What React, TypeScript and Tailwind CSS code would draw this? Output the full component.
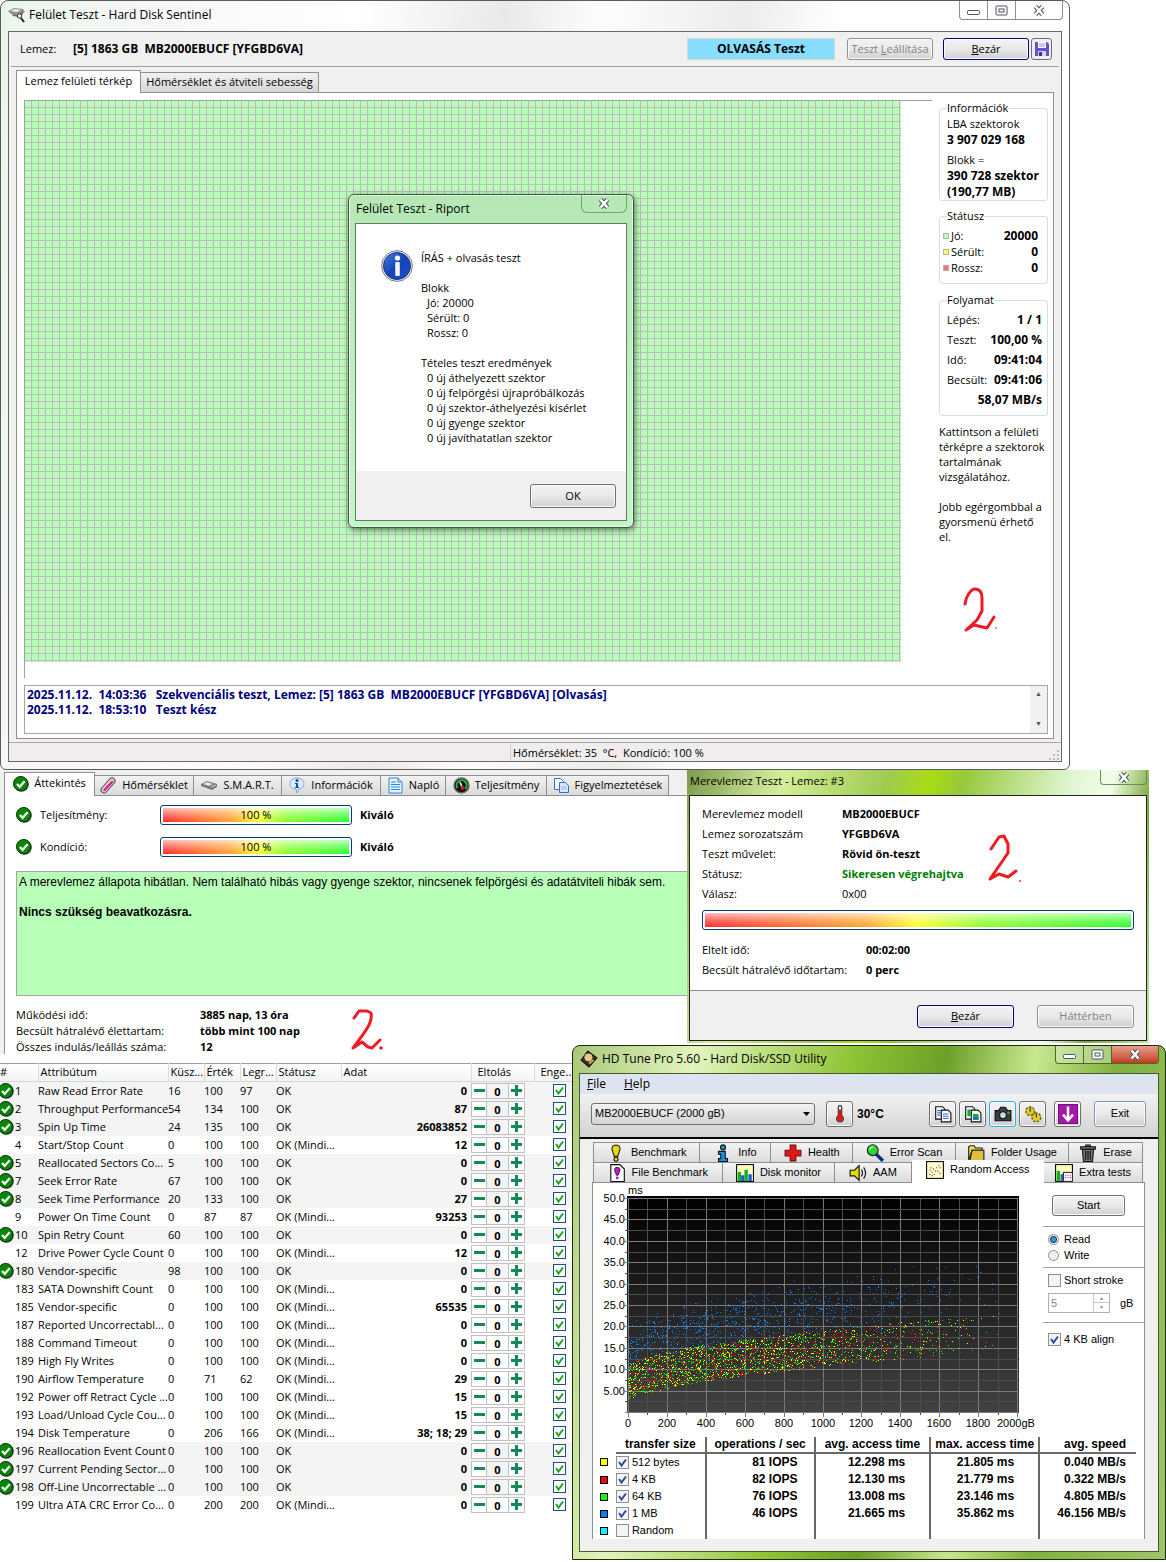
import React, { useState } from "react";
import clsx from "clsx";

/* ---------- data ---------- */

type Attr = [number, string, number, number, number, boolean, string];

// id, name, threshold, value, worst, critical, raw data
const attributes: Attr[] = [
  [1, "Raw Read Error Rate", 16, 100, 97, true, "0"],
  [2, "Throughput Performance", 54, 134, 100, true, "87"],
  [3, "Spin Up Time", 24, 135, 100, true, "26083852"],
  [4, "Start/Stop Count", 0, 100, 100, false, "12"],
  [5, "Reallocated Sectors Co...", 5, 100, 100, true, "0"],
  [7, "Seek Error Rate", 67, 100, 100, true, "0"],
  [8, "Seek Time Performance", 20, 133, 100, true, "27"],
  [9, "Power On Time Count", 0, 87, 87, false, "93253"],
  [10, "Spin Retry Count", 60, 100, 100, true, "0"],
  [12, "Drive Power Cycle Count", 0, 100, 100, false, "12"],
  [180, "Vendor-specific", 98, 100, 100, true, "0"],
  [183, "SATA Downshift Count", 0, 100, 100, false, "0"],
  [185, "Vendor-specific", 0, 100, 100, false, "65535"],
  [187, "Reported Uncorrectabl...", 0, 100, 100, false, "0"],
  [188, "Command Timeout", 0, 100, 100, false, "0"],
  [189, "High Fly Writes", 0, 100, 100, false, "0"],
  [190, "Airflow Temperature", 0, 71, 62, false, "29"],
  [192, "Power off Retract Cycle ...", 0, 100, 100, false, "15"],
  [193, "Load/Unload Cycle Cou...", 0, 100, 100, false, "15"],
  [194, "Disk Temperature", 0, 206, 166, false, "38; 18; 29"],
  [196, "Reallocation Event Count", 0, 100, 100, true, "0"],
  [197, "Current Pending Sector...", 0, 100, 100, true, "0"],
  [198, "Off-Line Uncorrectable ...", 0, 100, 100, true, "0"],
  [199, "Ultra ATA CRC Error Co...", 0, 200, 200, false, "0"],
];

const transfers = [
  { size: "512 bytes", color: "bg-[#ffff00]", on: true, iops: "81 IOPS", avg: "12.298 ms", max: "21.805 ms", speed: "0.040 MB/s" },
  { size: "4 KB", color: "bg-[#ff0000]", on: true, iops: "82 IOPS", avg: "12.130 ms", max: "21.779 ms", speed: "0.322 MB/s" },
  { size: "64 KB", color: "bg-[#00ff00]", on: true, iops: "76 IOPS", avg: "13.008 ms", max: "23.146 ms", speed: "4.805 MB/s" },
  { size: "1 MB", color: "bg-[#0080ff]", on: true, iops: "46 IOPS", avg: "21.665 ms", max: "35.862 ms", speed: "46.156 MB/s" },
  { size: "Random", color: "bg-[#00ffff]", on: false, iops: "", avg: "", max: "", speed: "" },
];

/* ---------- icons ---------- */

function CheckBadge() {
  return (
    <svg width="16" height="16" viewBox="0 0 16 16" className="block shrink-0">
      <circle cx="8.6" cy="8.6" r="7.2" fill="#555" />
      <circle cx="7.7" cy="7.7" r="7.2" fill="#0a860a" stroke="#032d03" strokeWidth="1" />
      <path d="M4 8l2.7 2.8 5-5.6" fill="none" stroke="#fff" strokeWidth="2.2" />
    </svg>
  );
}

function Scribble({ d, dot, className }: { d: string; dot: [number, number, number]; className: string }) {
  return (
    <svg viewBox="0 0 36 50" width="36" height="50" className={clsx("pointer-events-none absolute", className)}>
      <path d={d} fill="none" stroke="#ed1c24" strokeWidth="3" strokeLinecap="round" strokeLinejoin="round" />
      <circle cx={dot[0]} cy={dot[1]} r={dot[2]} fill="#ed1c24" />
    </svg>
  );
}

function CloseGlyph() {
  return (
    <svg width="14" height="11" viewBox="0 0 14 11" className="shrink-0">
      <path d="M3.500 1.500l7 8M10.500 1.500l-7 8" stroke="#4d5560" strokeWidth="4.600" />
      <path d="M3.500 1.500l7 8M10.500 1.500l-7 8" stroke="#fff" strokeWidth="2.600" />
    </svg>
  );
}

function MinGlyph() {
  return (
    <svg width="13" height="11" viewBox="0 0 13 11">
      <rect x=".5" y="5.500" width="12" height="4" rx="1" fill="#fff" stroke="#4d5560" />
    </svg>
  );
}

function MaxGlyph() {
  return (
    <svg width="13" height="11" viewBox="0 0 13 11">
      <rect x="1" y="1" width="11" height="9" rx="1" fill="#fff" stroke="#4d5560" />
      <rect x="4" y="4" width="5" height="3" fill="#fff" stroke="#4d5560" />
    </svg>
  );
}

function DiskIcon() {
  return (
    <svg width="17" height="16" viewBox="0 0 17 16" className="shrink-0">
      <path d="M0 4l6-3 9 1 2 3-5 3-9-1z" fill="#8e8e8e" />
      <path d="M2 4l5-2 6 1-4 2z" fill="#ededed" />
      <path d="M4 7l6 1 5-3v2l-4 3-6-1z" fill="#666" />
      <circle cx="11.500" cy="9" r="2.200" fill="#eee" stroke="#333" />
      <path d="M13 11l3 4" stroke="#222" strokeWidth="2" />
    </svg>
  );
}

function FloppyIcon() {
  return (
    <svg width="16" height="16" viewBox="0 0 16 16">
      <path d="M1 1h12l2 2v12H1z" fill="#6a50c8" />
      <rect x="4" y="1" width="8" height="6" fill="#fff" />
      <path d="M5 3h6M5 5h6" stroke="#9a8be0" />
      <rect x="4" y="10" width="8" height="5" fill="#d6d0f4" />
      <rect x="5" y="11" width="3" height="4" fill="#3c2a96" />
    </svg>
  );
}

function InfoBall() {
  return (
    <svg width="32" height="32" viewBox="0 0 32 32" className="shrink-0">
      <defs>
        <linearGradient id="ball" x1="0" y1="0" x2="1" y2="1">
          <stop offset="0" stopColor="#4a7fe0" />
          <stop offset=".5" stopColor="#1443b8" />
          <stop offset="1" stopColor="#1c4fd2" />
        </linearGradient>
      </defs>
      <circle cx="16" cy="16" r="15.4" fill="#e6e6e6" stroke="#808080" />
      <circle cx="16" cy="16" r="13.5" fill="url(#ball)" stroke="#16338a" />
      <circle cx="16.5" cy="8" r="2.6" fill="#fff" />
      <rect x="14.2" y="12" width="4.6" height="14" rx="1" fill="#f4f4f4" />
    </svg>
  );
}

function ThermoTabIcon() {
  return (
    <svg width="17" height="17" viewBox="0 0 17 17">
      <path d="M4 13L12 4" stroke="#4b4b4b" strokeWidth="7" strokeLinecap="round" />
      <path d="M4 13L12 4" stroke="#d9d9d9" strokeWidth="5" strokeLinecap="round" />
      <path d="M4.500 13L12 5" stroke="#e0218a" strokeWidth="2.500" strokeLinecap="round" />
    </svg>
  );
}

function DriveTabIcon() {
  return (
    <svg width="17" height="17" viewBox="0 0 17 17">
      <path d="M0 7l6-3 10 3v3l-5 3L0 9z" fill="#777" />
      <path d="M2 7l4-2 6 2-4 2z" fill="#e2e2e2" />
      <path d="M10 10l5-2" stroke="#ddd" />
    </svg>
  );
}

function BalloonTabIcon() {
  return (
    <svg width="17" height="17" viewBox="0 0 17 17">
      <path d="M8 1c4 0 7 2 7 5.500s-2 5-5 5.500l-2 4-1-4C3 12 1 10 1 6.500S4 1 8 1z" fill="#dcecfb" stroke="#7fa9d3" />
      <circle cx="8" cy="3.500" r="1.500" fill="#0b4db8" />
      <path d="M6 6h3v4h1v1H6v-1h1V7H6z" fill="#0b4db8" />
    </svg>
  );
}

function PageTabIcon() {
  return (
    <svg width="17" height="17" viewBox="0 0 17 17">
      <path d="M2 1h9l4 4v11H2z" fill="#e7f3ff" stroke="#2a86d8" />
      <path d="M11 1v4h4" fill="#bfe0ff" stroke="#2a86d8" />
      <path d="M4 5h5M4 7.500h9M4 10h9M4 12.500h9" stroke="#2a86d8" />
    </svg>
  );
}

function GaugeTabIcon() {
  return (
    <svg width="17" height="17" viewBox="0 0 17 17">
      <circle cx="8.500" cy="8.500" r="7.500" fill="#111" stroke="#6b6b6b" strokeWidth="1.500" />
      <path d="M4.500 11A5 5 0 1 1 12 12" fill="none" stroke="#1bbf3a" strokeWidth="2" />
      <path d="M7 5l2 5" stroke="#fff" strokeWidth="1.500" />
      <circle cx="9.500" cy="11" r="2" fill="#c42020" />
    </svg>
  );
}

function CopyTabIcon() {
  return (
    <svg width="17" height="17" viewBox="0 0 17 17">
      <path d="M1.500 1.500h6l3 3v8h-9z" fill="#fff" stroke="#3a6cc4" />
      <path d="M6.500 5.500h6l3 3v7h-9z" fill="#d7e6fb" stroke="#3a6cc4" />
      <path d="M8 10h6M8 12h6" stroke="#9cbcec" />
    </svg>
  );
}

function TuneIcon({ name }: { name: string }) {
  const shapes: Record<string, React.ReactNode> = {
    bang: (
      <>
        <path d="M8 1c3 0 4 2 3.500 4L9.500 11h-3L4.500 5C4 3 5 1 8 1z" fill="#e6dc00" stroke="#222" />
        <circle cx="8" cy="13.500" r="1.800" fill="#e6dc00" stroke="#222" />
      </>
    ),
    info: (
      <>
        <circle cx="8" cy="3" r="2.200" fill="#1496e6" stroke="#111" />
        <path d="M4 6.500h6V13h2v2.500H4V13h2V9H4z" fill="#1496e6" stroke="#111" />
      </>
    ),
    cross: <path d="M5.500 1h5v4.500H15v5h-4.500V15h-5v-4.500H1v-5h4.500z" fill="#e01818" stroke="#7c0b0b" />,
    lens: (
      <>
        <path d="M9 9l6 6" stroke="#0a2a8a" strokeWidth="3" />
        <circle cx="6" cy="5.500" r="4.800" fill="#2fd62f" stroke="#222" />
        <path d="M3.500 5a3 3 0 0 1 3-2.500" stroke="#d8ffd8" fill="none" />
      </>
    ),
    folder: (
      <>
        <path d="M1.500 14.500v-12l1-1h4l1 2h6v2h-9z" fill="#f0d860" stroke="#222" />
        <path d="M4.500 5.500h10.500v10H2.500z" fill="#e0bf3c" stroke="#222" />
      </>
    ),
    bin: (
      <>
        <path d="M3 4.500h10l-1 11H4z" fill="#777" stroke="#111" />
        <path d="M1.500 2.500h13v2h-13zM6 1h4v1.500H6zM6 6v8M8 6v8M10 6v8" fill="#999" stroke="#111" />
      </>
    ),
    pageBang: (
      <>
        <path d="M2.500.500h8l4 4v11h-12z" fill="#fff" stroke="#111" />
        <path d="M8 3c2.500 0 3 1.500 2.500 3L9 10H7.500L6 6C5.500 4.500 6 3 8 3z" fill="#c318c3" stroke="#111" strokeWidth=".7" />
        <circle cx="8.200" cy="12.500" r="1.300" fill="#c318c3" />
      </>
    ),
    bars: (
      <>
        <rect x=".5" y=".5" width="15" height="15" fill="#ffffc0" stroke="#111" />
        <path d="M3 15V7M9 15V5" stroke="#12b312" strokeWidth="3" />
        <path d="M6 15v-5M12.500 15V9" stroke="#1a5ae0" strokeWidth="3" />
      </>
    ),
    speaker: (
      <>
        <path d="M1 5.500h4l4-4v13l-4-4H1z" fill="#e6dc00" stroke="#111" />
        <path d="M11 5q2 3 0 6M13 3q3.500 5 0 10" fill="none" stroke="#111" />
      </>
    ),
    dots: (
      <>
        <rect x=".5" y=".5" width="15" height="15" fill="#ffffc8" stroke="#111" />
        <path d="M3 12h1M5 10h1M7 12h1M6 7h1M10 9h1M12 6h1M9 6h1M12 11h1M3 8h1" stroke="#e01818" />
        <path d="M4 6h1M8 9h1M11 4h1M5 13h1" stroke="#1a5ae0" />
      </>
    ),
    extra: (
      <>
        <rect x=".5" y=".5" width="15" height="15" fill="#ffffc0" stroke="#111" />
        <path d="M3 15V6" stroke="#12b312" strokeWidth="3" />
        <path d="M6 15V9" stroke="#1a5ae0" strokeWidth="2" />
        <rect x="7.500" y="7.500" width="8" height="8" fill="#fff" stroke="#333" />
        <path d="M9 10h1M11 10h1M13 10h1M9 12h1M11 12h1M13 12h1" stroke="#d01ad0" />
      </>
    ),
    thermo: (
      <>
        <path d="M6.500 2a1.500 1.500 0 0 1 3 0v7.500a3 3 0 1 1-3 0z" fill="#fff" stroke="#222" />
        <path d="M8 4v8" stroke="#e01818" strokeWidth="2.500" />
        <circle cx="8" cy="12" r="2.600" fill="#e01818" />
      </>
    ),
    copy: (
      <>
        <path d="M1.500 1.500h6l2 2v9h-8z" fill="#fff" stroke="#111" />
        <path d="M6.500 4.500h6l2.500 2.500v8H6.500z" fill="#fff" stroke="#111" />
        <path d="M3 5h3M3 7h3M3 9h3M8 8h5M8 10h5M8 12h5" stroke="#2a6ad0" />
      </>
    ),
    copyImg: (
      <>
        <path d="M1.500 1.500h6l2 2v9h-8z" fill="#fff" stroke="#111" />
        <path d="M6.500 4.500h6l2.500 2.500v8H6.500z" fill="#fff" stroke="#111" />
        <path d="M3 4h3v6H3zM8 8h5v5H8z" fill="#18a838" />
        <path d="M8 11h5v2H8z" fill="#1a5ae0" />
      </>
    ),
    camera: (
      <>
        <path d="M1 5h3l2-3h4l2 3h3v9H1z" fill="#3a3f44" stroke="#111" />
        <circle cx="8" cy="9" r="3" fill="#cdd" stroke="#111" />
        <rect x="12" y="6" width="2" height="1.500" fill="#2fd62f" />
      </>
    ),
    gears: (
      <>
        <circle cx="5.500" cy="5.500" r="3.500" fill="#d9c21c" stroke="#6d6100" strokeWidth="2" strokeDasharray="2 1" />
        <circle cx="5.500" cy="5.500" r="3.200" fill="#e0cc30" />
        <circle cx="11" cy="11" r="3.500" fill="#d9c21c" stroke="#6d6100" strokeWidth="2" strokeDasharray="2 1" />
        <circle cx="11" cy="11" r="3.200" fill="#e0cc30" />
        <path d="M5.500 2v4M11 8v3" stroke="#333" />
      </>
    ),
    down: (
      <>
        <rect x="0" y="0" width="16" height="16" fill="#a31aa8" stroke="#5d0a66" />
        <path d="M8 2v10M4 8.500L8 13l4-4.500" fill="none" stroke="#fff" strokeWidth="2" />
      </>
    ),
    app: (
      <>
        <path d="M7 1l8 6-7 8-7-6z" fill="#3a2f28" stroke="#111" />
        <circle cx="7.500" cy="6.500" r="3.500" fill="#e8c890" />
        <path d="M8 12l4-3" stroke="#e09a30" strokeWidth="2" />
      </>
    ),
  };
  const size = name === "down" ? 20 : 18;
  return (
    <svg width={size} height={size} viewBox="0 0 16 16" className="shrink-0">
      {shapes[name]}
    </svg>
  );
}

/* ---------- small controls ---------- */

function Button({ children, className, disabled, label }: { children: React.ReactNode; className?: string; disabled?: boolean; label?: string }) {
  return (
    <button
      type="button"
      disabled={disabled}
      aria-label={label}
      className={clsx(
        "flex items-center justify-center rounded-[3px] border bg-linear-to-b from-[#f3f3f3] via-[#e9e9e9] to-[#d0d0d0] whitespace-nowrap shadow-[inset_0_0_0_1px_#fbfbfb]",
        disabled ? "border-[#909090] text-[#838383]" : "text-black",
        className
      )}
    >
      {children}
    </button>
  );
}

function Meter({ label, children }: { label: string; children?: React.ReactNode }) {
  return (
    <div
      role="progressbar"
      aria-label={label}
      aria-valuenow={100}
      className="h-5 rounded-[3px] border border-[#003c74] bg-white p-[2px]"
    >
      <div className="h-full bg-[linear-gradient(90deg,#ff2a2a,#ffa62a_38%,#ffff2a_50%,#8cff2a_65%,#2aff2a)]">
        <div className="flex h-full items-center justify-center bg-linear-to-b from-white/70 via-white/30 to-transparent leading-4">
          {children}
        </div>
      </div>
    </div>
  );
}

function Tick({ id, on, className, color, label }: { id?: string; on: boolean; className: string; color: string; label?: string }) {
  const [checked, setChecked] = useState(on);
  return (
    <span className="inline-grid">
      <input
        type="checkbox"
        id={id}
        aria-label={label}
        checked={checked}
        onChange={() => setChecked(!checked)}
        className={clsx("size-[13px] appearance-none border [grid-area:1/1]", className)}
      />
      {checked && (
        <svg viewBox="0 0 13 13" className="pointer-events-none size-[13px] [grid-area:1/1]">
          <path d="M3 6l2.500 3.500L10 3.500" fill="none" stroke={color} strokeWidth="2" />
        </svg>
      )}
    </span>
  );
}

function Pair({ label, value, className }: { label: string; value: string; className?: string }) {
  return (
    <div className={clsx("flex justify-between", className)}>
      <span>{label}</span>
      <b className="text-xs leading-[inherit]">{value}</b>
    </div>
  );
}

/* ---------- surface test window ---------- */

function ReportDialog() {
  return (
    <div className="absolute top-[93px] left-[323px] w-[286px] rounded-md border border-[#3f5a43] bg-linear-to-b from-[#b5e8b5] to-[#c4f5c6] px-[6px] pb-[6px] shadow-[inset_0_0_0_1px_#e0ffe0,1px_2px_6px_rgba(0,0,0,.55)]">
      <div className="flex h-7 justify-between">
        <span className="pt-[6px] pl-[1px] text-xs leading-4">Felület Teszt - Riport</span>
        <button type="button" aria-label="Bezárás" className="flex h-[18px] w-[46px] items-center justify-center rounded-b-md border border-t-0 border-[#76a07a]">
          <CloseGlyph />
        </button>
      </div>
      <div className="border border-[#5f7d62] bg-white">
        <div className="flex gap-2 pt-[26px] pb-[26px] pl-[25px]">
          <InfoBall />
          <div className="leading-[15px] whitespace-pre">
            <p>ÍRÁS + olvasás teszt</p>
            <p className="pt-[15px]">Blokk</p>
            <p className="pl-[6px]">Jó: 20000</p>
            <p className="pl-[6px]">Sérült: 0</p>
            <p className="pl-[6px]">Rossz: 0</p>
            <p className="pt-[15px]">Tételes teszt eredmények</p>
            <p className="pl-[6px]">0 új áthelyezett szektor</p>
            <p className="pl-[6px]">0 új felpörgési újrapróbálkozás</p>
            <p className="pl-[6px]">0 új szektor-áthelyezési kísérlet</p>
            <p className="pl-[6px]">0 új gyenge szektor</p>
            <p className="pl-[6px]">0 új javíthatatlan szektor</p>
          </div>
        </div>
        <div className="flex justify-end bg-[#f0f0f0] px-[10px] pt-[13px] pb-3">
          <Button className="h-6 w-[86px] border-[#707070]">OK</Button>
        </div>
      </div>
    </div>
  );
}

function SidePanel() {
  return (
    <div className="w-[109px] shrink-0">
      <fieldset className="rounded-[3px] border border-[#d5dfe5] pl-[7px] leading-4 whitespace-nowrap">
        <legend>Információk</legend>
        <p>LBA szektorok</p>
        <p className="text-xs leading-4 font-bold">3 907 029 168</p>
        <p className="pt-1">Blokk =</p>
        <p className="text-xs leading-4 font-bold">390 728 szektor</p>
        <p className="text-xs leading-4 font-bold">(190,77 MB)</p>
      </fieldset>
      <fieldset className="mt-[7px] rounded-[3px] border border-[#d5dfe5] pt-1 pr-[9px] pb-[7px] pl-[3px] leading-4">
        <legend className="ml-1">Státusz</legend>
        <div className="flex items-center gap-[2px]">
          <i className="size-[6px] border border-[#b0b0b0] bg-[#b8ffb8]" />
          <Pair label="Jó:" value="20000" className="grow" />
        </div>
        <div className="flex items-center gap-[2px]">
          <i className="size-[6px] border border-[#b0b0b0] bg-[#ffff60]" />
          <Pair label="Sérült:" value="0" className="grow" />
        </div>
        <div className="flex items-center gap-[2px]">
          <i className="size-[6px] border border-[#b0b0b0] bg-[#ff7070]" />
          <Pair label="Rossz:" value="0" className="grow" />
        </div>
      </fieldset>
      <fieldset className="mt-2 rounded-[3px] border border-[#d5dfe5] pt-[2px] pr-[5px] pb-[5px] pl-[7px] leading-5 whitespace-nowrap">
        <legend className="leading-4">Folyamat</legend>
        <Pair label="Lépés:" value="1 / 1" />
        <Pair label="Teszt:" value="100,00 %" />
        <Pair label="Idő:" value="09:41:04" />
        <Pair label="Becsült:" value="09:41:06" />
        <Pair label="" value="58,07 MB/s" />
      </fieldset>
      <p className="mt-2 leading-[15px]">
        Kattintson a felületi
        <br />
        térképre a szektorok
        <br />
        tartalmának
        <br />
        vizsgálatához.
      </p>
      <p className="pt-[15px] leading-[15px] whitespace-nowrap">
        Jobb egérgombbal a
        <br />
        gyorsmenü érhető
        <br />
        el.
      </p>
    </div>
  );
}

function SurfaceTest() {
  return (
    <section className="relative mr-24 rounded-t-lg rounded-b-md border border-[#5a5a5a] bg-[linear-gradient(100deg,#e9f7ea,#f6f6f6_12%,#ffffff_30%,#e9e9e9_42%,#fdfdfd_50%,#ececec_62%,#fff_70%)] px-[7px] pb-[7px]">
      <div className="flex h-[30px] justify-between">
        <div className="flex items-center gap-1 pb-[2px]">
          <DiskIcon />
          <h1 className="text-xs leading-4">Felület Teszt - Hard Disk Sentinel</h1>
        </div>
        <div className="mr-[-1px] flex h-[19px] divide-x divide-[#8e8e8e] rounded-b-[4px] border border-t-0 border-[#8e8e8e] bg-white/60">
          <button type="button" aria-label="Kis méret" className="flex w-7 items-center justify-center"><MinGlyph /></button>
          <button type="button" aria-label="Teljes méret" className="flex w-7 items-center justify-center"><MaxGlyph /></button>
          <button type="button" aria-label="Bezárás" className="flex w-[46px] items-center justify-center"><CloseGlyph /></button>
        </div>
      </div>
      <div className="border border-[#6a6a6a] bg-[#f0f0f0]">
        <div className="mx-[2px] flex h-[35px] items-center border-b border-[#a0a0a0] pr-[7px] pl-[9px]">
          <span className="w-[53px]">Lemez:</span>
          <b className="text-xs whitespace-pre">[5] 1863 GB  MB2000EBUCF [YFGBD6VA]</b>
          <b className="ml-auto h-[22px] w-[148px] border border-[#d8d8d8] bg-[#87deff] text-center text-xs leading-5">OLVASÁS Teszt</b>
          <Button disabled className="ml-3 h-[22px] w-[86px]">
            Teszt&nbsp;<u>L</u>eállítása
          </Button>
          <Button className="ml-[10px] h-[22px] w-[86px] border-[#000080]">
            <u>B</u>ezár
          </Button>
          <button type="button" aria-label="Mentés" className="ml-[2px] flex h-[22px] w-[21px] items-center justify-center rounded-[3px] border border-[#707070] bg-[#eeeeee]">
            <FloppyIcon />
          </button>
        </div>
        <div role="tablist" className="mx-[7px] flex items-end pt-[3px]">
          <button type="button" role="tab" aria-selected="true" className="relative z-10 -mb-px h-[23px] w-[125px] border border-b-0 border-[#8c8e94] bg-white pb-[2px]">
            Lemez felületi térkép
          </button>
          <button type="button" role="tab" aria-selected="false" className="h-[20px] w-[178px] border border-b-0 border-l-0 border-[#8c8e94] bg-linear-to-b from-[#f2f2f2] to-[#d6d6d6] whitespace-nowrap">
            Hőmérséklet és átviteli sebesség
          </button>
        </div>
        <div className="mx-[7px] border border-[#8c8e94] bg-white pt-[7px] pr-[5px] pb-1 pl-[7px]">
          <div className="flex gap-[7px]">
            <div className="relative h-[578px] grow border-t border-l border-[#a0a0a0]">
              <div className="mr-[31px] h-[561px] bg-[#b8ffb8] bg-[linear-gradient(#c3b8c3_1px,transparent_1px),linear-gradient(90deg,#c3b8c3_1px,transparent_1px)] bg-[length:7px_7px] bg-[position:-1px_-1px] bg-repeat" />
              <ReportDialog />
            </div>
            <SidePanel />
          </div>
          <div className="mt-[7px] flex h-[49px] justify-between border border-[#a6a6a6]">
            <div className="pl-[2px] text-xs leading-[15px] font-bold whitespace-pre text-[#000080]">
              <p className="pt-[1px]">2025.11.12.  14:03:36   Szekvenciális teszt, Lemez: [5] 1863 GB  MB2000EBUCF [YFGBD6VA] [Olvasás]</p>
              <p>2025.11.12.  18:53:10   Teszt kész</p>
            </div>
            <div className="flex w-[17px] flex-col justify-between bg-[#f1f1f1] text-center text-[7px] text-[#555]">
              <button type="button" aria-label="Fel" className="h-[17px]">▲</button>
              <button type="button" aria-label="Le" className="h-[17px]">▼</button>
            </div>
          </div>
        </div>
        <div className="mt-[3px] flex h-[19px] items-end justify-between border-t border-[#a8a8a8] bg-[#f1edec]">
          <span className="ml-[501px] border-l border-[#cfcfcf] pl-[2px] leading-[16px] whitespace-pre">Hőmérséklet: 35  °C,  Kondíció: 100 %</span>
          <svg width="12" height="12" viewBox="0 0 12 12">
            <path d="M8 1h2v2H8zM8 5h2v2H8zM8 9h2v2H8zM4 5h2v2H4zM4 9h2v2H4zM0 9h2v2H0z" fill="#bdbdbd" />
          </svg>
        </div>
      </div>
      <Scribble className="top-[586px] left-[962px]" d="M2 17C3 9 8 2 12 2c5 0 7 4 7 9v13L14 33 3 43l8-5 13 3 7-11" dot={[33, 41, 0.8]} />
    </section>
  );
}

/* ---------- overview ---------- */

const tabs = [
  { label: "Áttekintés", icon: <CheckBadge />, width: "w-[91px]" },
  { label: "Hőmérséklet", icon: <ThermoTabIcon />, width: "w-[99px]" },
  { label: "S.M.A.R.T.", icon: <DriveTabIcon />, width: "w-[88px]" },
  { label: "Információk", icon: <BalloonTabIcon />, width: "w-[99px]" },
  { label: "Napló", icon: <PageTabIcon />, width: "w-[65px]" },
  { label: "Teljesítmény", icon: <GaugeTabIcon />, width: "w-[101px]" },
  { label: "Figyelmeztetések", icon: <CopyTabIcon />, width: "w-[122px]" },
];

function Overview() {
  return (
    <section className="relative bg-[#f0f0f0] pt-[2px] pl-1">
      <div role="tablist" className="flex items-end">
        {tabs.map((tab, i) => (
          <button
            type="button"
            role="tab"
            aria-selected={i === 0}
            key={tab.label}
            className={clsx(
              "flex items-center justify-center gap-[5px] border border-b-0 border-[#8c8e94] whitespace-nowrap",
              i === 0 ? "relative z-10 -mb-px h-6 bg-white pb-[2px]" : "h-5 border-l-0 bg-linear-to-b from-[#f2f2f2] to-[#dadada]",
              tab.width
            )}
          >
            {tab.icon}
            {tab.label}
          </button>
        ))}
      </div>
      <div className="h-[259px] border-t border-l border-[#8c8e94] bg-white pt-[9px] pl-[11px] leading-4">
        {["Teljesítmény:", "Kondíció:"].map((label) => (
          <div key={label} className="mb-3 flex h-5 items-center">
            <CheckBadge />
            <span className="w-[128px] pl-2">{label}</span>
            <div className="w-[192px]">
              <Meter label={label}>100 %</Meter>
            </div>
            <b className="pl-2">Kiváló</b>
          </div>
        ))}
        <div className="mt-[14px] h-[125px] border border-r-0 border-[#a6a6a6] bg-[#b8ffb8] pt-[3px] pl-[2px] font-['Liberation_Sans',sans-serif] text-xs leading-[15px] whitespace-nowrap">
          <p>A merevlemez állapota hibátlan. Nem található hibás vagy gyenge szektor, nincsenek felpörgési és adatátviteli hibák sem.</p>
          <p className="pt-[15px] font-bold">Nincs szükség beavatkozásra.</p>
        </div>
        <dl className="mt-[11px] grid grid-cols-[184px_1fr]">
          <dt>Működési idő:</dt>
          <dd className="font-bold">3885 nap, 13 óra</dd>
          <dt>Becsült hátralévő élettartam:</dt>
          <dd className="font-bold">több mint 100 nap</dd>
          <dt>Összes indulás/leállás száma:</dt>
          <dd className="font-bold">12</dd>
        </dl>
      </div>
      <Scribble className="top-[238px] left-[350px]" d="M4 10L9 3h8l4 2c2 9-5 18-18 35l9-6 6 5 4 1 8-8" dot={[31, 40, 1.8]} />
    </section>
  );
}

/* ---------- self test dialog ---------- */

function SelfTest() {
  const rows = [
    ["Merevlemez modell", "MB2000EBUCF", "font-bold"],
    ["Lemez sorozatszám", "YFGBD6VA", "font-bold"],
    ["Teszt művelet:", "Rövid ön-teszt", "font-bold"],
    ["Státusz:", "Sikeresen végrehajtva", "font-bold text-[#008000]"],
    ["Válasz:", "0x00", ""],
  ];
  return (
    <section className="relative mb-5 bg-[linear-gradient(105deg,#7d9c4c,#b9d486_12%,#d4ef9a_18%,#9fca50_38%,#a8dc14_46%,#95c93a_52%,#dff5d0_72%,#f2ffea_80%,#7ca83c_88%,#c9e6a0)] px-[2px] pb-[2px]">
      <div className="flex h-[25px] justify-between">
        <h2 className="pt-[3px] pl-[1px] leading-4">Merevlemez Teszt - Lemez: #3</h2>
        <button type="button" aria-label="Bezárás" className="flex h-[15px] w-[47px] items-center justify-center rounded-b-[4px] border border-t-0 border-[#6f8a52]">
          <CloseGlyph />
        </button>
      </div>
      <div className="border border-[#222] bg-white">
        <div className="px-3 pt-2 leading-5">
          <dl className="grid grid-cols-[140px_1fr]">
            {rows.map(([label, value, style]) => (
              <React.Fragment key={label}>
                <dt>{label}</dt>
                <dd className={style}>{value}</dd>
              </React.Fragment>
            ))}
          </dl>
          <div className="mt-[6px] mb-[10px]">
            <Meter label="Teszt" />
          </div>
          <dl className="grid grid-cols-[164px_1fr]">
            <dt>Eltelt idő:</dt>
            <dd className="font-bold">00:02:00</dd>
            <dt>Becsült hátralévő időtartam:</dt>
            <dd className="font-bold">0 perc</dd>
          </dl>
        </div>
        <div className="mt-[10px] flex justify-end gap-[23px] border-t border-[#8c8c8c] bg-[#f0f0f0] px-3 pt-[14px] pb-3">
          <Button className="h-[23px] w-[97px] border-[#000080]">
            <u>B</u>ezár
          </Button>
          <Button disabled className="h-[23px] w-[97px]">Háttérben</Button>
        </div>
      </div>
      <Scribble className="top-[63px] left-[300px]" d="M4 16l8-12 5-1 4 8v9L3 46l9-5 9 3 8-6" dot={[33, 48, 0.9]} />
    </section>
  );
}

/* ---------- S.M.A.R.T. table ---------- */

function SmartTable() {
  const head = "border-r border-[#dcdcdc] font-normal";
  return (
    <table className="w-[572px] shrink-0 table-fixed self-start border-t border-[#a0a0a0] text-left whitespace-nowrap">
      <colgroup>
        <col className="w-[38px]" />
        <col className="w-[130px]" />
        <col className="w-9" />
        <col className="w-9" />
        <col className="w-9" />
        <col className="w-[65px]" />
        <col className="w-[130px]" />
        <col className="w-[63px]" />
        <col className="w-[38px]" />
      </colgroup>
      <thead>
        <tr className="h-[18px] border-b border-[#d5d5d5] bg-linear-to-b from-white to-[#f2f3f5]">
          <th className={head}>#</th>
          <th className={clsx(head, "pl-[2px]")}>Attribútum</th>
          <th className={clsx(head, "pl-[2px]")}>Küsz...</th>
          <th className={clsx(head, "pl-[2px]")}>Érték</th>
          <th className={clsx(head, "pl-[2px]")}>Legr...</th>
          <th className={clsx(head, "pl-[2px]")}>Státusz</th>
          <th className={clsx(head, "pl-[2px]")}>Adat</th>
          <th className={clsx(head, "pl-[6px]")}>Eltolás</th>
          <th className="overflow-hidden pl-[6px] font-normal">Enge..</th>
        </tr>
      </thead>
      <tbody className="leading-4">
        {attributes.map(([id, name, threshold, value, worst, critical, raw]) => (
          <tr key={id} className={clsx("h-[18px]", critical && "bg-[#f4f4f4]")}>
            <td className="p-0">
              <div className="-ml-[2px] flex items-center gap-[1px]">
                {critical ? <CheckBadge /> : <span className="w-4" />}
                {id}
              </div>
            </td>
            <td className="p-0">{name}</td>
            <td className="p-0">{threshold}</td>
            <td className="p-0">{value}</td>
            <td className="p-0">{worst}</td>
            <td className="p-0">{critical ? "OK" : "OK (Mindi..."}</td>
            <td className="p-0 pr-1 text-right font-bold">{raw}</td>
            <td className="p-0">
              <div className="flex h-4 w-[54px] divide-x divide-[#c0c0c0] border border-[#c0c0c0]">
                <button type="button" aria-label="Csökkentés" className="flex w-[15px] items-center justify-center bg-white">
                  <i className="h-[3px] w-[11px] bg-[#128a55]" />
                </button>
                <output className="grow text-center leading-[15px] font-bold">0</output>
                <button type="button" aria-label="Növelés" className="grid w-[15px] place-items-center bg-white">
                  <i className="h-[3px] w-[11px] bg-[#128a55] [grid-area:1/1]" />
                  <i className="h-[11px] w-[3px] bg-[#128a55] [grid-area:1/1]" />
                </button>
              </div>
            </td>
            <td className="p-0">
              <div className="flex pl-[19px]">
                <Tick label={`${id} engedélyezése`} on color="#1fa11f" className="border-[#1c5180] bg-white" />
              </div>
            </td>
          </tr>
        ))}
      </tbody>
    </table>
  );
}

/* ---------- HD Tune ---------- */

const X0 = 35;
const Y0 = 227;
const PX = 389 / 2000;
const PY = 214 / 50;

// small deterministic generator, so the cloud of samples is stable between renders
function makeRandom(seed: number) {
  let s = seed;
  return () => {
    s = (s * 16807) % 2147483647;
    return s / 2147483647;
  };
}

function cloud(seed: number, count: number, blue: boolean) {
  const rnd = makeRandom(seed);
  let d = "";
  for (let i = 0; i < count; i++) {
    const t = rnd() * (0.3 + 0.68 * rnd());
    const low = 2.5 + 11.5 * Math.pow(t / 0.9, 0.6);
    const spread = (rnd() + rnd()) / 2;
    const ms = blue ? low + 6 + spread * 18 * (0.7 + t * 0.3) : low + rnd() * 8.6;
    d += `M${Math.round(X0 + t * 2000 * PX)} ${Math.round(Y0 - ms * PY)}h1v1h-1z`;
  }
  return d;
}

const clouds = [
  { fill: "#0080ff", d: cloud(77777, 850, true) },
  { fill: "#ffff00", d: cloud(123456, 780, false) },
  { fill: "#ff0000", d: cloud(424242, 780, false) },
  { fill: "#00ff00", d: cloud(900100, 780, false) },
];

function AccessChart() {
  const cols = Array.from({ length: 21 }, (_, i) => i);
  return (
    <svg viewBox="0 0 450 244" width="450" height="244" className="shrink-0 font-['Liberation_Sans',sans-serif] text-[11px]" shapeRendering="crispEdges">
      <defs>
        <linearGradient id="plot" x1="0" y1="0" x2="0" y2="1">
          <stop offset="0" stopColor="#000" />
          <stop offset="1" stopColor="#424242" />
        </linearGradient>
      </defs>
      <rect x="34" y="11" width="392" height="217" fill="url(#plot)" />
      {cols.map((i) => (
        <rect key={`v${i}`} x={Math.round(X0 + i * 100 * PX)} y="13" width="1" height={i % 2 ? 217 : 219} fill={i % 2 ? "#4c4c4c" : "#7a7a7a"} />
      ))}
      {cols.map((i) => (
        <rect key={`h${i}`} x="32" y={Math.round(Y0 - i * 2.5 * PY)} width="393" height="1" fill={i % 2 ? "#4c4c4c" : "#7a7a7a"} />
      ))}
      {clouds.map((c) => (
        <path key={c.fill} d={c.d} fill={c.fill} />
      ))}
      <text x="35" y="9">ms</text>
      {["5.00", "10.0", "15.0", "20.0", "25.0", "30.0", "35.0", "40.0", "45.0", "50.0"].map((label, i) => (
        <text key={label} x="32" y={Math.round(Y0 + 4 - (i + 1) * 5 * PY)} textAnchor="end">
          {label}
        </text>
      ))}
      {[0, 200, 400, 600, 800, 1000, 1200, 1400, 1600, 1800].map((gb) => (
        <text key={gb} x={Math.round(X0 + gb * PX)} y="242" textAnchor="middle">
          {gb}
        </text>
      ))}
      <text x="404" y="242">2000gB</text>
    </svg>
  );
}

const tuneTabs1 = [
  ["Benchmark", "bang", "grow-107"],
  ["Info", "info", "grow-71"],
  ["Health", "cross", "grow-82"],
  ["Error Scan", "lens", "grow-103"],
  ["Folder Usage", "folder", "grow-114"],
  ["Erase", "bin", "grow-74"],
];

const tuneTabs2 = [
  ["File Benchmark", "pageBang", "grow-129"],
  ["Disk monitor", "bars", "grow-113"],
  ["AAM", "speaker", "grow-76"],
  ["Random Access", "dots", "grow-134"],
  ["Extra tests", "extra", "grow-99"],
];

function TuneTab({ tab, active }: { tab: string[]; active?: boolean }) {
  return (
    <button
      type="button"
      role="tab"
      aria-selected={!!active}
      className={clsx(
        "flex basis-0 items-center justify-center gap-[6px] border-[#8c8e94] whitespace-nowrap",
        active ? "relative z-10 -mt-[2px] -mb-px h-[23px] bg-white pb-1" : "h-5 border-t border-r bg-linear-to-b from-[#f4f4f4] to-[#dcdcdc]",
        tab[2]
      )}
    >
      <TuneIcon name={tab[1]} />
      {tab[0]}
    </button>
  );
}

function HdTune() {
  const [mode, setMode] = useState("read");
  const radio = "size-[11px] appearance-none rounded-full border border-[#8e8f8f] bg-[#f0f0f0] checked:bg-[radial-gradient(circle,#2f9bd0_2px,#1b3c5c_3px,#f0f0f0_4px)]";
  const toolButton = "h-[26px] w-[27px] border-[#707070]";
  return (
    <section className="relative z-10 -mt-[18px] min-w-0 grow rounded-t-lg border border-[#1c2b0c] bg-[linear-gradient(100deg,#a9c878,#e2f5bd_18%,#8cc232_42%,#6d9f28_55%,#c8e890_68%,#7fb23c_80%,#9fc46a)] px-[6px] pb-[7px] font-['Liberation_Sans',sans-serif] text-[11px]">
      <div className="flex h-[27px] justify-between pl-[1px] font-['Open_Sans',sans-serif] text-xs">
        <div className="flex items-center gap-1 pb-[1px]">
          <TuneIcon name="app" />
          <h2>HD Tune Pro 5.60 - Hard Disk/SSD Utility</h2>
        </div>
        <div className="flex h-[18px] divide-x divide-[#4c6630] overflow-hidden rounded-b-[4px] border border-t-0 border-[#4c6630]">
          <button type="button" aria-label="Minimize" className="flex w-7 items-center justify-center bg-white/30"><MinGlyph /></button>
          <button type="button" aria-label="Maximize" className="flex w-7 items-center justify-center bg-white/30"><MaxGlyph /></button>
          <button type="button" aria-label="Close" className="flex w-[46px] items-center justify-center bg-linear-to-b from-[#e6a08c] to-[#c0381c]"><CloseGlyph /></button>
        </div>
      </div>
      <div className="border border-[#44592c] bg-[#f0f0f0]">
        <nav className="flex h-5 items-center gap-[18px] bg-[#dde4ef] pl-[7px] font-['Open_Sans',sans-serif] text-xs">
          <a href="#file"><u>F</u>ile</a>
          <a href="#help"><u>H</u>elp</a>
        </nav>
        <div className="flex h-[45px] items-center border-b-2 border-black bg-linear-to-b from-[#f2f2f2] to-[#d2d2d2] pr-3 pb-1 pl-[11px]">
          <div className="grid w-[224px] items-center">
            <select aria-label="Drive" className="h-[22px] w-full appearance-none rounded-[3px] border border-[#707070] bg-linear-to-b from-[#f2f2f2] to-[#d4d4d4] pl-[3px] text-black [grid-area:1/1]">
              <option>MB2000EBUCF (2000 gB)</option>
            </select>
            <svg width="7" height="4" viewBox="0 0 7 4" className="pointer-events-none mr-[5px] justify-self-end [grid-area:1/1]">
              <path d="M0 0h7L3.500 4z" />
            </svg>
          </div>
          <Button label="Temperature" className={clsx(toolButton, "ml-[11px]")}><TuneIcon name="thermo" /></Button>
          <b className="ml-1 grow text-xs">30°C</b>
          <div className="flex gap-[3px]">
            <Button label="Copy text" className={toolButton}><TuneIcon name="copy" /></Button>
            <Button label="Copy image" className={toolButton}><TuneIcon name="copyImg" /></Button>
            <Button label="Screenshot" className="h-[26px] w-[27px] border-[#22b4ea]"><TuneIcon name="camera" /></Button>
            <Button label="Options" className={toolButton}><TuneIcon name="gears" /></Button>
          </div>
          <Button label="Save" className={clsx(toolButton, "ml-2")}><TuneIcon name="down" /></Button>
          <Button className="ml-[13px] h-[26px] w-[52px] border-[#7b98b0]">Exit</Button>
        </div>
        <div role="tablist" className="ml-[13px] pt-[3px] pr-[15px]">
          <div className="flex border-l border-[#8c8e94]">
            {tuneTabs1.map((tab) => (
              <TuneTab key={tab[0]} tab={tab} />
            ))}
          </div>
          <div className="flex border-l border-[#8c8e94]">
            {tuneTabs2.map((tab) => (
              <TuneTab key={tab[0]} tab={tab} active={tab[0] === "Random Access"} />
            ))}
          </div>
        </div>
        <div className="ml-3 mr-[13px] border border-b-0 border-[#8c8e94] bg-white">
          <div className="flex justify-between pt-[2px]">
            <AccessChart />
            <div className="w-[102px] pt-[10px]">
              <Button className="ml-[9px] h-[21px] w-[73px] border-[#707070]">Start</Button>
              <div className="mt-[10px] border-y border-[#a0a0a0] py-1 leading-4">
                {["read", "write"].map((m) => (
                  <label key={m} className="flex items-center gap-[5px] pl-[5px] capitalize">
                    <input type="radio" name="mode" checked={mode === m} onChange={() => setMode(m)} className={radio} />
                    {m}
                  </label>
                ))}
              </div>
              <div className="flex items-center gap-[3px] pt-1 pl-[5px] leading-4">
                <Tick id="short-stroke" on={false} color="#31479e" className="border-[#8e8f8f] bg-[#f4f4f4]" />
                <label htmlFor="short-stroke">Short stroke</label>
              </div>
              <div className="mt-[5px] flex items-center gap-[10px] pl-[5px]">
                <div className="flex h-5 w-[62px] border border-[#b0b0b0] bg-white">
                  <input id="stroke-size" defaultValue="5" disabled className="w-11 pl-[2px] text-[#838383]" />
                  <span className="flex w-4 flex-col border-l border-[#c8c8c8] text-center text-[5px] leading-[9px] text-[#888]">
                    <button type="button" aria-label="More" disabled className="h-[9px] border-b border-[#c8c8c8]">▲</button>
                    <button type="button" aria-label="Less" disabled className="h-[9px]">▼</button>
                  </span>
                </div>
                <label htmlFor="stroke-size">gB</label>
              </div>
              <div className="mt-[9px] flex items-center gap-[3px] border-t border-[#a0a0a0] pt-2 pl-[5px] leading-4">
                <Tick id="align" on color="#31479e" className="border-[#8e8f8f] bg-[#f4f4f4]" />
                <label htmlFor="align">4 KB align</label>
              </div>
            </div>
          </div>
          <table className="mt-2 mr-2 mb-3 ml-[7px] table-fixed text-xs font-bold">
            <colgroup>
              <col className="w-4" />
              <col className="w-[90px]" />
              <col className="w-[109px]" />
              <col className="w-[116px]" />
              <col className="w-[109px]" />
              <col className="w-[97px]" />
            </colgroup>
            <thead>
              <tr className="leading-[15px] whitespace-nowrap">
                <td className="p-0" />
                <th className="border-b-2 border-[#696969] p-0">transfer size</th>
                <th className="border-b-2 border-l-2 border-[#696969] p-0">operations / sec</th>
                <th className="border-b-2 border-l-2 border-[#696969] p-0">avg. access time</th>
                <th className="border-b-2 border-l-2 border-[#696969] p-0">max. access time</th>
                <th className="border-b-2 border-l-2 border-[#696969] p-0 pr-[10px] text-right">avg. speed</th>
              </tr>
            </thead>
            <tbody>
              {transfers.map((row) => (
                <tr key={row.size} className="h-[17px] leading-[17px] whitespace-nowrap">
                  <td className="p-0">
                    <i className={clsx("block size-2 border border-black", row.color)} />
                  </td>
                  <td className="p-0 text-[11px] leading-[17px] font-normal">
                    <div className="flex items-center gap-[3px]">
                      <Tick id={row.size} on={row.on} color="#31479e" className="border-[#8e8f8f] bg-[#f4f4f4]" />
                      <label htmlFor={row.size}>{row.size}</label>
                    </div>
                  </td>
                  <td className="border-l-2 border-[#696969] pr-4 text-right">{row.iops}</td>
                  <td className="border-l-2 border-[#696969] pr-6 text-right">{row.avg}</td>
                  <td className="border-l-2 border-[#696969] pr-6 text-right">{row.max}</td>
                  <td className="border-l-2 border-[#696969] pr-[10px] text-right">{row.speed}</td>
                </tr>
              ))}
            </tbody>
          </table>
        </div>
      </div>
    </section>
  );
}

export default function App() {
  return (
    <main className="bg-white font-['Open_Sans',sans-serif] text-[11px] text-black">
      <SurfaceTest />
      <div className="mr-[17px] grid grid-cols-[minmax(0,1fr)_462px] items-start">
        <Overview />
        <SelfTest />
      </div>
      <div className="flex">
        <SmartTable />
        <HdTune />
      </div>
    </main>
  );
}
